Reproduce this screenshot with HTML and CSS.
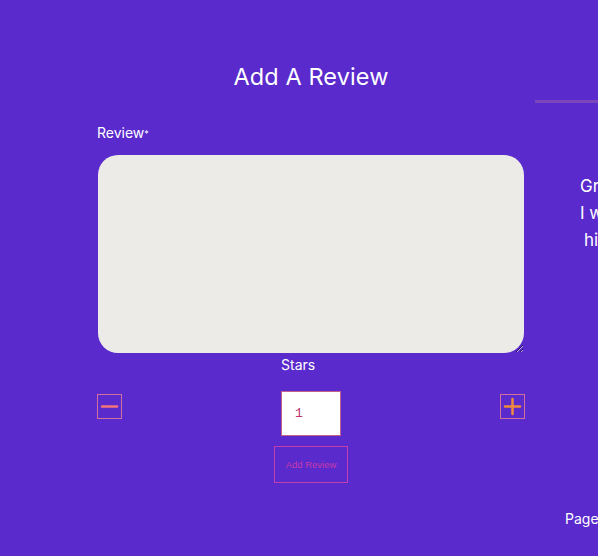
FILE: index.html
```html
<!DOCTYPE html>
<html>
<head>
<meta charset="utf-8">
<link rel="stylesheet" href="styles.css">
</head>
<body>
<div class="page">
  <section class="form-col">
    <h1 class="title">Add A Review</h1>
    <label class="field-label">Review<span class="req">*</span></label>
    <textarea class="review-box"></textarea>
    <div class="stars-row">
      <button class="step-btn minus" aria-label="decrease">
        <svg width="19" height="19" viewBox="0 0 19 19"><line x1="2" y1="9.5" x2="17" y2="9.5" stroke="#f4747c" stroke-width="2.5" stroke-linecap="round"/></svg>
      </button>
      <div class="stars-group">
        <div class="stars-label">Stars</div>
        <input class="stars-input" type="text" value="1">
      </div>
      <button class="step-btn plus" aria-label="increase">
        <svg width="19" height="19" viewBox="0 0 19 19"><line x1="2" y1="9.5" x2="17" y2="9.5" stroke="#f08a3c" stroke-width="2.5" stroke-linecap="round"/><line x1="9.5" y1="2" x2="9.5" y2="17" stroke="#f08a3c" stroke-width="2.5" stroke-linecap="round"/></svg>
      </button>
    </div>
    <div class="submit-wrap"><button class="submit-btn">Add Review</button></div>
  </section>
  <aside class="side-col">
    <div class="side-rule"></div>
    <div class="side-text">
      <div class="side-line">Great food and service.</div>
      <div class="side-line">I would recommend it</div>
      <div class="side-line indent">highly to everyone!</div>
    </div>
    <div class="side-page">Page 1 of 3</div>
  </aside>
</div>
</body>
</html>
```
FILE: styles.css
```css
html, body {
  margin: 0;
  padding: 0;
  background: #5a2acc;
  overflow: hidden;
  width: 598px;
  height: 556px;
}
body {
  font-family: Inter, "Noto Sans", sans-serif;
  color: #ffffff;
}
.page {
  display: flex;
  width: 1000px;
}
.form-col {
  width: 428px;
  margin-left: 97px;
  padding-top: 59px;
  display: flex;
  flex-direction: column;
}
.title {
  margin: 0;
  font-size: 23.5px;
  font-weight: 400;
  line-height: 36px;
  text-align: center;
  letter-spacing: 0.1px;
}
.field-label {
  margin-top: 30px;
  font-size: 14px;
  line-height: 16px;
  height: 16px;
}
.req {
  font-size: 9px;
  vertical-align: 1px;
}
.review-box {
  display: block;
  margin: 14px 0 0 1px;
  width: 426px;
  height: 198px;
  box-sizing: border-box;
  border: none;
  border-radius: 20px;
  background: #ecebe8;
  resize: both;
  outline: none;
}
.stars-row {
  display: flex;
  justify-content: space-between;
  align-items: flex-start;
  margin-top: 3px;
}
.step-btn {
  margin-top: 38px;
  width: 25px;
  height: 25px;
  padding: 0;
  border: 1px solid #d2709c;
  background: transparent;
  display: flex;
  align-items: center;
  justify-content: center;
}
.stars-group {
  width: 60px;
  display: flex;
  flex-direction: column;
}
.stars-label {
  font-size: 14px;
  line-height: 18px;
  height: 18px;
}
.stars-input {
  margin-top: 17px;
  width: 60px;
  height: 45px;
  box-sizing: border-box;
  border: 1px solid #c4618a;
  background: #ffffff;
  padding: 0 0 0 13px;
  font-family: "Liberation Mono", monospace;
  font-size: 13px;
  color: #c0306a;
  outline: none;
}
.submit-wrap {
  display: flex;
  justify-content: center;
  margin-top: 10px;
}
.submit-btn {
  width: 74px;
  height: 37px;
  border: 1px solid #c23fb0;
  background: transparent;
  color: #c83aa8;
  font-family: "Liberation Sans", Arial, sans-serif;
  font-size: 9.5px;
  padding: 0;
}
.side-col {
  margin-left: 10px;
  width: 300px;
  display: flex;
  flex-direction: column;
}
.side-rule {
  margin-top: 100px;
  height: 3px;
  background: #7b45bc;
}
.side-text {
  margin-top: 70px;
  padding-left: 45px;
  font-size: 17px;
  line-height: 27px;
  white-space: nowrap;
}
.indent {
  padding-left: 4px;
}
.side-page {
  margin-top: 256px;
  padding-left: 30px;
  font-size: 14px;
  line-height: 18px;
}
```
